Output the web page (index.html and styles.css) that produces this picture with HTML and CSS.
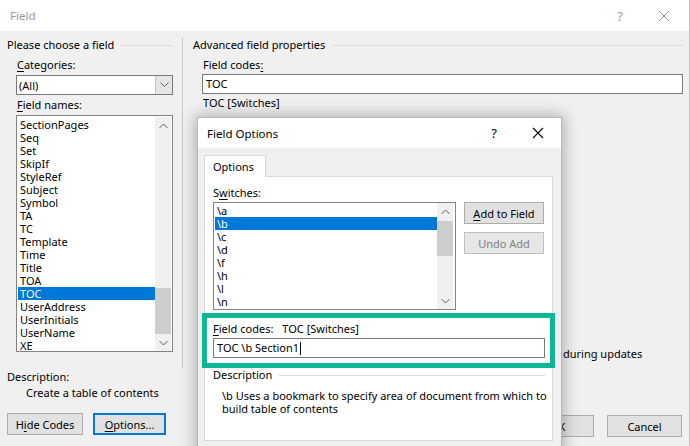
FILE: index.html
```html
<!DOCTYPE html>
<html>
<head>
<meta charset="utf-8">
<link rel="stylesheet" href="styles.css">
</head>
<body>
<div class="window">
  <div class="titlebar">
    <span class="title">Field</span>
    <span class="tb-help">?</span>
    <svg class="tb-close" width="12" height="12" viewBox="0 0 12 12"><path d="M1 1 L11 11 M11 1 L1 11" stroke="#8a8a8a" stroke-width="1" fill="none"/></svg>
  </div>
  <div class="body">
    <div class="left">
      <div class="group-title"><span>Please choose a field</span><span class="rule"></span></div>
      <div class="label"><u>C</u>ategories:</div>
      <div class="combo">
        <span class="combo-text">(All)</span>
        <span class="combo-drop"><svg width="9" height="6" viewBox="0 0 9 6"><polyline points="0.5,0.5 4.5,4.5 8.5,0.5" stroke="#606060" fill="none"/></svg></span>
      </div>
      <div class="label label-tight"><u>F</u>ield names:</div>
      <div class="listbox names">
        <div class="rows">
          <div class="row">SectionPages</div>
          <div class="row">Seq</div>
          <div class="row">Set</div>
          <div class="row">SkipIf</div>
          <div class="row">StyleRef</div>
          <div class="row">Subject</div>
          <div class="row">Symbol</div>
          <div class="row">TA</div>
          <div class="row">TC</div>
          <div class="row">Template</div>
          <div class="row">Time</div>
          <div class="row">Title</div>
          <div class="row">TOA</div>
          <div class="row sel">TOC</div>
          <div class="row">UserAddress</div>
          <div class="row">UserInitials</div>
          <div class="row">UserName</div>
          <div class="row">XE</div>
        </div>
        <div class="scrollbar">
          <div class="sb-btn"><svg width="9" height="6" viewBox="0 0 9 6"><polyline points="0.5,5 4.5,1 8.5,5" stroke="#606060" fill="none"/></svg></div>
          <div class="sb-track"><div class="sb-thumb names-thumb"></div></div>
          <div class="sb-btn"><svg width="9" height="6" viewBox="0 0 9 6"><polyline points="0.5,1 4.5,5 8.5,1" stroke="#606060" fill="none"/></svg></div>
        </div>
      </div>
      <div class="desc-label">Description:</div>
      <div class="desc-text">Create a table of contents</div>
      <div class="btn-row">
        <div class="btn hide-btn">H<u>i</u>de Codes</div>
        <div class="btn opt-btn"><u>O</u>ptions...</div>
      </div>
    </div>
    <div class="sep"></div>
    <div class="right">
      <div class="group-title"><span>Advanced field properties</span><span class="rule"></span></div>
      <div class="label">Field codes<u>:</u></div>
      <div class="textbox wide">TOC</div>
      <div class="syntax">TOC [Switches]</div>
      <div class="check-row"><span class="check-head"><span class="checkbox"></span>Preserve formatting</span><span>during updates</span></div>
      <div class="btn-row end">
        <div class="btn ok-btn">OK</div>
        <div class="btn cancel-btn">Cancel</div>
      </div>
    </div>
  </div>

  <div class="dialog">
    <div class="dlg-titlebar">
      <span class="dlg-title">Field Options</span>
      <span class="dlg-help">?</span>
      <svg class="dlg-close" width="12" height="12" viewBox="0 0 12 12"><path d="M1 1 L11 11 M11 1 L1 11" stroke="#000" stroke-width="1.1" fill="none"/></svg>
    </div>
    <div class="dlg-body">
      <div class="tab">Options</div>
      <div class="panel">
        <div class="label-sm">S<u>w</u>itches:</div>
        <div class="switch-row">
          <div class="listbox switches">
            <div class="rows">
              <div class="row">\a</div>
              <div class="row sel">\b</div>
              <div class="row">\c</div>
              <div class="row">\d</div>
              <div class="row">\f</div>
              <div class="row">\h</div>
              <div class="row">\l</div>
              <div class="row">\n</div>
            </div>
            <div class="scrollbar">
              <div class="sb-btn"><svg width="9" height="6" viewBox="0 0 9 6"><polyline points="0.5,5 4.5,1 8.5,5" stroke="#606060" fill="none"/></svg></div>
              <div class="sb-track"><div class="sb-thumb sw-thumb"></div></div>
              <div class="sb-btn"><svg width="9" height="6" viewBox="0 0 9 6"><polyline points="0.5,1 4.5,5 8.5,1" stroke="#606060" fill="none"/></svg></div>
            </div>
          </div>
          <div class="side-btns">
            <div class="btn add-btn"><u>A</u>dd to Field</div>
            <div class="btn undo-btn">Undo Add</div>
          </div>
        </div>
        <div class="codes-line"><span><u>F</u>ield codes:</span><span class="codes-syntax">TOC [Switches]</span></div>
        <div class="textbox codes-box">TOC \b Section1<span class="caret"></span></div>
        <div class="group-title desc-title"><span>Description</span><span class="rule"></span></div>
        <div class="sw-desc">\b Uses a bookmark to specify area of document from which to<br>build table of contents</div>
      </div>
    </div>
    <div class="highlight"></div>
  </div>
</div>
</body>
</html>
```

FILE: styles.css
```css
* { box-sizing: border-box; }
html, body { margin: 0; padding: 0; }
body {
  width: 690px;
  height: 446px;
  overflow: hidden;
  font-family: "Noto Sans", "Open Sans", sans-serif;
  font-size: 11px;
  color: #000;
  background: #f0f0f0;
}
u { text-decoration: underline; text-underline-offset: 2px; }

.window {
  position: relative;
  width: 690px;
  height: 446px;
  background: #f0f0f0;
  border-right: 1px solid #c4c4c4;
  overflow: hidden;
}

.titlebar {
  height: 31px;
  background: #fff;
  display: flex;
  align-items: center;
  padding-left: 10px;
}
.title { color: #9a9a9a; font-size: 11.5px; flex: 1; }
.tb-help { color: #9a9a9a; font-size: 13px; margin-right: 35px; }
.tb-close { margin-right: 19px; }

.body {
  display: flex;
  padding: 7px 0 0 7px;
  height: 415px;
}
.left { width: 166px; }
.sep {
  width: 1px;
  height: 331px;
  background: #c9c9c9;
  margin: -1px 10px 0 9px;
}
.right { width: 490px; }

.group-title {
  display: flex;
  align-items: center;
  height: 14px;
  line-height: 14px;
}
.group-title .rule {
  flex: 1;
  height: 1px;
  background: #dcdcdc;
  margin-left: 7px;
  margin-top: 1px;
}

.label {
  height: 14px;
  line-height: 14px;
  margin-top: 6px;
  padding-left: 10px;
}
.label.label-tight { margin-top: 3px; }

.combo {
  margin: 3px 0 0 9px;
  width: 157px;
  height: 20px;
  background: #fff;
  border: 1px solid #7a7a7a;
  display: flex;
  align-items: center;
}
.combo-text { flex: 1; padding-left: 2px; }
.combo-drop {
  width: 17px;
  height: 18px;
  background: #e5e5e5;
  border-left: 1px solid #c6c6c6;
  display: flex;
  align-items: center;
  justify-content: center;
}

.listbox {
  background: #fff;
  border: 1px solid #828282;
  display: flex;
  padding: 2px 1px 0 1px;
  overflow: hidden;
}
.listbox.names {
  margin: 3px 0 0 9px;
  width: 157px;
  height: 237px;
}
.rows { flex: 1; overflow: hidden; }
.row {
  height: 13px;
  line-height: 13px;
  padding-left: 2px;
  white-space: nowrap;
}
.row.sel { background: #0078d7; color: #fff; }

.scrollbar {
  width: 16px;
  display: flex;
  flex-direction: column;
  background: #f0f0f0;
  margin-top: -1px;
}
.sb-btn {
  height: 17px;
  display: flex;
  align-items: center;
  justify-content: center;
  flex: none;
}
.sb-track { flex: 1; }
.sb-thumb { background: #cdcdcd; }
.names-thumb { margin-top: 154px; height: 46px; }

.desc-label {
  margin-top: 18px;
  height: 14px;
  line-height: 14px;
}
.desc-text {
  margin-top: 2px;
  padding-left: 19px;
  height: 14px;
  line-height: 14px;
}

.btn-row {
  display: flex;
  gap: 10px;
  margin-top: 13px;
}
.btn {
  height: 22px;
  background: #e1e1e1;
  border: 1px solid #adadad;
  display: flex;
  align-items: center;
  justify-content: center;
  white-space: nowrap;
}
.hide-btn { width: 76px; }
.opt-btn { width: 73px; border: 2px solid #0078d7; }

.textbox {
  background: #fff;
  border: 1px solid #7a7a7a;
  height: 20px;
  line-height: 18px;
  padding-left: 3px;
}
.textbox.wide {
  margin: 2px 0 0 9px;
  width: 481px;
}
.syntax {
  margin-top: 2px;
  padding-left: 10px;
  height: 14px;
  line-height: 14px;
}
.check-row {
  display: flex;
  margin-top: 237px;
  height: 14px;
  line-height: 14px;
  white-space: nowrap;
}
.check-head {
  width: 370px;
  display: flex;
  align-items: center;
  padding-left: 10px;
}
.checkbox {
  width: 13px;
  height: 13px;
  border: 1px solid #333;
  background: #fff;
  margin-right: 5px;
}
.btn-row.end {
  justify-content: flex-end;
  gap: 13px;
  margin-top: 54px;
  padding-right: 1px;
}
.ok-btn { width: 73px; }
.cancel-btn { width: 75px; }

/* Field Options dialog (floating window) */
.dialog {
  position: absolute;
  left: 197px;
  top: 117px;
  width: 365px;
  height: 340px;
  background: #f0f0f0;
  border: 1px solid #b9b9b9;
  box-shadow: 0 0 14px 2px rgba(0, 0, 0, 0.28);
}
.dlg-titlebar {
  height: 30px;
  background: #fff;
  display: flex;
  align-items: center;
  padding-left: 9px;
}
.dlg-title { flex: 1; font-size: 11.5px; }
.dlg-help { font-size: 13px; margin-right: 35px; }
.dlg-close { margin-right: 17px; }

.dlg-body {
  padding: 7px 0 0 6px;
}
.tab {
  width: 62px;
  height: 22px;
  background: #fff;
  border: 1px solid #d9d9d9;
  border-bottom: none;
  padding-left: 8px;
  line-height: 21px;
  position: relative;
  z-index: 1;
  margin-bottom: -1px;
}
.panel {
  width: 349px;
  height: 265px;
  background: #fff;
  border: 1px solid #d9d9d9;
  padding: 9px 0 0 8px;
}
.label-sm {
  height: 14px;
  line-height: 14px;
}
.switch-row {
  display: flex;
  margin-top: 2px;
}
.listbox.switches {
  width: 243px;
  height: 108px;
  padding: 1px 2px 0 1px;
}
.sw-thumb { margin-top: 1px; height: 35px; }
.side-btns {
  margin-left: 8px;
  display: flex;
  flex-direction: column;
  gap: 8px;
}
.add-btn { width: 80px; }
.undo-btn {
  width: 80px;
  color: #838383;
  background: #e6e6e6;
  border-color: #bfbfbf;
}
.codes-line {
  margin-top: 12px;
  height: 14px;
  line-height: 14px;
  display: flex;
}
.codes-syntax { margin-left: 9px; }
.codes-box {
  margin-top: 2px;
  width: 332px;
  display: flex;
  align-items: center;
  white-space: pre;
}
.caret {
  display: inline-block;
  width: 1px;
  height: 13px;
  background: #000;
  margin-left: 1px;
}
.desc-title { margin-top: 10px; width: 332px; }
.sw-desc {
  margin-top: 7px;
  padding-left: 9px;
  line-height: 13px;
}

/* annotation overlay */
.highlight {
  position: absolute;
  left: 4px;
  top: 195px;
  width: 353px;
  height: 55px;
  border: 5px solid #0db795;
}
```
